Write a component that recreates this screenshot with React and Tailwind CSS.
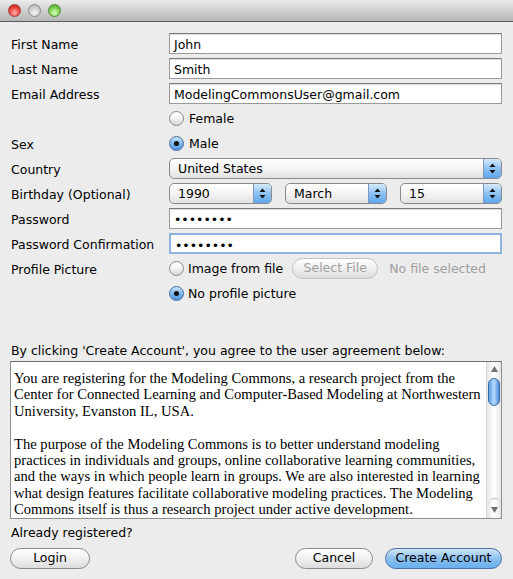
import React from "react";

const font = "font-['DejaVu_Sans',sans-serif] text-[12.5px] text-black";

const TextField = ({ value, focused }) => (
  <div
    className={`h-[21px] flex-1 bg-white pl-[4px] leading-[21px] ${
      focused
        ? "border-2 border-[#8fb3da] leading-[17px] pl-[3px]"
        : "border border-[#9a9a9a] border-t-[#7a7a7a] shadow-[inset_0_1px_0_#dedede] leading-[19px]"
    }`}
  >
    {value}
  </div>
);

const Arrows = () => (
  <svg width="7" height="11" viewBox="0 0 7 11">
    <path d="M3.5 0.5 L6.5 4 L0.5 4 Z" fill="#111" />
    <path d="M3.5 10.5 L6.5 7 L0.5 7 Z" fill="#111" />
  </svg>
);

const Popup = ({ value, className }) => (
  <div
    className={`flex h-[21px] items-stretch overflow-hidden rounded-[5px] border border-[#8a8a8a] bg-gradient-to-b from-white via-[#f4f4f4] to-[#e2e2e2] ${className}`}
  >
    <span className="flex-1 pl-[8px] leading-[20px]">{value}</span>
    <span className="flex w-[18px] items-center justify-center border-l border-[#7b98c2] bg-gradient-to-b from-[#d6eafc] via-[#8ec2f2] to-[#5ea6ec]">
      <Arrows />
    </span>
  </div>
);

const Radio = ({ checked }) =>
  checked ? (
    <span className="flex h-[15px] w-[15px] shrink-0 items-center justify-center rounded-full border border-[#4a6c9c] bg-gradient-to-b from-[#cfe6fb] via-[#7fb8ee] to-[#4b95e0]">
      <span className="h-[5px] w-[5px] rounded-full bg-[#111]" />
    </span>
  ) : (
    <span className="h-[15px] w-[15px] shrink-0 rounded-full border border-[#8a8a8a] bg-gradient-to-b from-white via-[#f2f2f2] to-[#d6d6d6]" />
  );

const Row = ({ label, children }) => (
  <div className="flex h-[21px] items-center">
    <div className="w-[158px] shrink-0 pt-[3px]">{label}</div>
    <div className="flex flex-1 items-center">{children}</div>
  </div>
);

const AquaButton = ({ children, blue, className }) => (
  <div
    className={`flex h-[21px] items-center justify-center rounded-full border ${
      blue
        ? "border-[#4b72a8] bg-gradient-to-b from-[#cfe5fa] via-[#8cc0ef] to-[#6aaeee]"
        : "border-[#8a8a8a] bg-gradient-to-b from-white via-[#f0f0f0] to-[#dcdcdc]"
    } ${className}`}
  >
    {children}
  </div>
);

const App = () => {
  const lines1 = [
    "You are registering for the Modeling Commons, a research project from the",
    "Center for Connected Learning and Computer-Based Modeling at Northwestern",
    "University, Evanston IL, USA.",
  ];
  const lines2 = [
    "The purpose of the Modeling Commons is to better understand modeling",
    "practices in individuals and groups, online collaborative learning communities,",
    "and the ways in which people learn in groups. We are also interested in learning",
    "what design features facilitate collaborative modeling practices. The Modeling",
    "Commons itself is thus a research project under active development.",
  ];

  return (
    <div className={`h-[579px] w-[513px] overflow-hidden bg-[#ececec] ${font}`}>
      {/* title bar */}
      <div className="flex h-[22px] items-center gap-[7px] border-b border-[#5c5c5c] bg-gradient-to-b from-[#ebebeb] to-[#b6b6b6] pl-[8px]">
        <span className="h-[13px] w-[13px] rounded-full border border-[#a23a3a] bg-[radial-gradient(circle_at_50%_70%,#ffb0a8,#e8423a_55%,#b21f1a)]" />
        <span className="h-[13px] w-[13px] rounded-full border border-[#8c8c8c] bg-[radial-gradient(circle_at_50%_70%,#f4f4f4,#cfcfcf_55%,#9d9d9d)]" />
        <span className="h-[13px] w-[13px] rounded-full border border-[#4e8a3a] bg-[radial-gradient(circle_at_50%_70%,#d8ffc0,#7ccd4e_55%,#3f8f22)]" />
      </div>

      <div className="px-[11px] pt-[11px]">
        <div className="flex flex-col gap-[4px]">
          <Row label="First Name">
            <TextField value="John" />
          </Row>
          <Row label="Last Name">
            <TextField value="Smith" />
          </Row>
          <Row label="Email Address">
            <TextField value="ModelingCommonsUser@gmail.com" />
          </Row>
          <Row label="">
            <Radio />
            <span className="ml-[5px] pt-[2px]">Female</span>
          </Row>
          <Row label="Sex">
            <Radio checked />
            <span className="ml-[5px] pt-[2px]">Male</span>
          </Row>
          <Row label="Country">
            <Popup value="United States" className="flex-1" />
          </Row>
          <Row label="Birthday (Optional)">
            <Popup value="1990" className="w-[103px]" />
            <Popup value="March" className="ml-[13px] w-[102px]" />
            <Popup value="15" className="ml-[13px] flex-1" />
          </Row>
          <Row label="Password">
            <TextField value="••••••••" />
          </Row>
          <Row label="Password Confirmation">
            <TextField value="••••••••" focused />
          </Row>
          <Row label="Profile Picture">
            <Radio />
            <span className="ml-[4px] pt-[2px]">Image from file</span>
            <AquaButton className="ml-[9px] h-[19px] w-[86px] !border-[#c2c2c2] text-[#a0a0a0]">
              Select File
            </AquaButton>
            <span className="ml-[11px] pt-[2px] text-[#a0a0a0]">No file selected</span>
          </Row>
          <Row label="">
            <Radio checked />
            <span className="ml-[4px] pt-[2px]">No profile picture</span>
          </Row>
        </div>

        <div className="mt-[36px] h-[18px] pt-[2px] leading-[18px]">
          By clicking 'Create Account', you agree to the user agreement below:
        </div>

        <div className="-ml-[1px] mt-[3px] flex h-[158px] border border-[#8e8e8e] border-t-[#6e6e6e] bg-white">
          <div className="flex-1 overflow-hidden whitespace-nowrap pl-[3px] pt-[8px] font-['Liberation_Serif',serif] text-[14.6px] leading-[16.4px]">
            {lines1.map((l) => (
              <div key={l}>{l}</div>
            ))}
            <div className="h-[16.4px]" />
            {lines2.map((l) => (
              <div key={l}>{l}</div>
            ))}
          </div>
          <div className="flex w-[15px] flex-col items-center border-l border-[#d8d8d8] bg-gradient-to-r from-[#e6e6e6] via-white to-[#e6e6e6]">
            <svg width="7" height="6" viewBox="0 0 7 6" className="mt-[4px]">
              <path d="M3.5 0 L7 6 L0 6 Z" fill="#6e6e6e" />
            </svg>
            <div className="mt-[6px] h-[28px] w-[12px] rounded-full border border-[#3f6aa8] bg-gradient-to-r from-[#5d9ee6] via-[#b8dbfa] to-[#4a8cdc]" />
            <div className="flex-1" />
            <div className="h-[8px] w-[13px] rounded-t-full border-t border-[#bdbdbd]" />
            <svg width="7" height="6" viewBox="0 0 7 6" className="mb-[5px] mt-[1px]">
              <path d="M3.5 6 L7 0 L0 0 Z" fill="#6e6e6e" />
            </svg>
          </div>
        </div>

        <div className="mt-[4px] h-[18px] pt-[1px] leading-[18px]">Already registered?</div>

        <div className="mt-[7px] flex items-center">
          <AquaButton className="-ml-[1px] w-[80px]">Login</AquaButton>
          <div className="flex-1" />
          <AquaButton className="w-[78px]">Cancel</AquaButton>
          <AquaButton blue className="ml-[12px] w-[117px]">
            Create Account
          </AquaButton>
        </div>
      </div>
    </div>
  );
};

export default App;
